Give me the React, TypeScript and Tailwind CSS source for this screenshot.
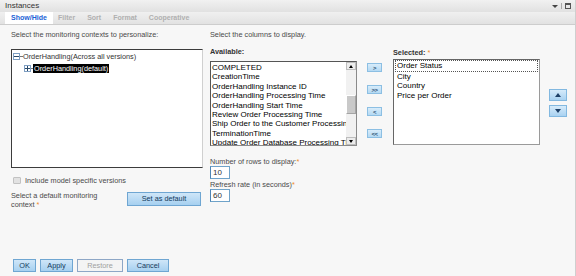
const available = [
  "COMPLETED",
  "CreationTime",
  "OrderHandling Instance ID",
  "OrderHandling Processing Time",
  "OrderHandling Start Time",
  "Review Order Processing Time",
  "Ship Order to the Customer Processing Time",
  "TerminationTime",
  "Update Order Database Processing Time",
];

const selected = ["Order Status", "City", "Country", "Price per Order"];

function BlueButton({ label, className = "", disabled = false }: { label: string; className?: string; disabled?: boolean }) {
  return (
    <button
      type="button"
      className={`h-[13px] flex items-center justify-center border text-[7.3px] leading-none ${
        disabled
          ? "bg-[#f4f4f4] border-[#8ea7c6] text-[#a0a0a0]"
          : "bg-gradient-to-b from-[#cfe6f8] to-[#a6d0f0] border-[#6fa6d2] text-[#143a5c]"
      } ${className}`}
    >
      {label}
    </button>
  );
}

function ArrowButton({ glyph }: { glyph: string }) {
  return (
    <button
      type="button"
      className="w-[15px] h-[9px] flex items-center justify-center bg-gradient-to-b from-[#d8ecfa] to-[#b4d9f3] border border-[#8cbfe3] text-[6px] font-bold leading-none text-[#2a4f70] tracking-[-0.5px]"
    >
      {glyph}
    </button>
  );
}

function TreeIcon({ minus }: { minus: boolean }) {
  return (
    <span className="relative w-[7px] h-[7px] border border-[#7e9ec2] bg-white flex items-center justify-center shrink-0">
      <span className="absolute w-[5px] h-px bg-[#2a4a6a]" />
      {!minus && <span className="absolute h-[5px] w-px bg-[#2a4a6a]" />}
    </span>
  );
}

export default function App() {
  return (
    <div className="w-[576px] h-[276px] overflow-hidden bg-[#f7f7f7] flex flex-col font-['Liberation_Sans',Arial,sans-serif] border-r border-[#cfcfcf]">
      {/* title bar */}
      <div className="h-[12px] shrink-0 bg-gradient-to-b from-[#f1f1f1] to-[#e1e1e1] flex items-center justify-between pl-[5px] pr-[4px]">
        <span className="text-[8px] leading-none text-[#333]">Instances</span>
        <div className="flex items-center gap-[3px]">
          <span className="w-0 h-0 border-l-[3px] border-r-[3px] border-t-[3px] border-l-transparent border-r-transparent border-t-[#444]" />
          <span className="w-px h-[6px] bg-[#aaa]" />
          <span className="w-[6px] h-[6px] border border-[#555] border-t-2" />
        </div>
      </div>

      {/* tabs */}
      <div className="h-[13px] shrink-0 bg-gradient-to-b from-[#f0f0f0] to-[#e2e2e2] border-b border-[#cdcdcd] flex items-end pl-[5px]">
        <div className="h-[12px] w-[48px] bg-white flex items-center justify-center text-[7px] font-bold text-[#1a5fd6]">
          Show/Hide
        </div>
        <span className="ml-[5px] mb-[3px] text-[7px] font-bold text-[#b0b0b0] leading-none">Filter</span>
        <span className="ml-[12px] mb-[3px] text-[7px] font-bold text-[#b0b0b0] leading-none">Sort</span>
        <span className="ml-[12px] mb-[3px] text-[7px] font-bold text-[#b0b0b0] leading-none">Format</span>
        <span className="ml-[12px] mb-[3px] text-[7px] font-bold text-[#b0b0b0] leading-none">Cooperative</span>
      </div>

      <div className="flex-1 flex text-[7.3px] leading-[9px] text-[#4a4a4a]">
        {/* left column */}
        <div className="pl-[11px] w-[203px] flex flex-col">
          <p className="mt-[5px]">Select the monitoring contexts to personalize:</p>
          <div className="mt-[10px] h-[119px] w-[192px] bg-white border border-[#3c3c3c] border-r-[#d0d0d0] text-[#333]">
            <div className="h-[12px] flex items-center pl-px">
              <TreeIcon minus />
              <span className="w-[3px] h-px bg-[#777]" />
              <span>OrderHandling(Across all versions)</span>
            </div>
            <div className="h-[12px] flex items-center pl-[12px]">
              <TreeIcon minus={false} />
              <span className="w-[2px] h-px bg-[#777]" />
              <span className="bg-black text-white px-px">OrderHandling(default)</span>
            </div>
          </div>
          <div className="mt-[8px] flex items-center pl-[2px]">
            <span className="w-[8px] h-[7px] bg-[#e2e2e2] border border-[#c2c2c2] rounded-[1px]" />
            <span className="ml-[4px]">Include model specific versions</span>
          </div>
          <div className="mt-[6px] flex items-start">
            <div className="w-[100px]">
              <div>Select a default monitoring</div>
              <div>
                context <span className="text-[#f08a2a]">*</span>
              </div>
            </div>
            <BlueButton label="Set as default" className="ml-[16px] mt-[1px] w-[74px] h-[14px]" />
          </div>
        </div>

        {/* right column */}
        <div className="pl-[7px] flex flex-col">
          <p className="mt-[5px]">Select the columns to display.</p>
          <div className="flex items-start mt-[8px]">
            <div className="flex flex-col">
              <span className="font-bold text-[#333]">Available:</span>
              <div className="mt-[5px] h-[85px] w-[147px] bg-white border border-[#8a8a8a] border-t-[#555] border-l-[#555] flex text-[8px] leading-[9.4px] text-black">
                <div className="flex-1 overflow-hidden pl-px pt-px">
                  {available.map((a) => (
                    <div key={a} className="whitespace-nowrap">{a}</div>
                  ))}
                </div>
                <div className="w-[10px] bg-[#f1f1f1] flex flex-col">
                  <div className="h-[8px] bg-[#ececec] border border-[#bdbdbd] flex items-center justify-center">
                    <span className="w-0 h-0 border-l-[2px] border-r-[2px] border-b-[3px] border-l-transparent border-r-transparent border-b-black" />
                  </div>
                  <div className="h-[25px]" />
                  <div className="h-[19px] bg-[#c9c9c9] border border-[#a5a5a5] border-t-white border-l-white" />
                  <div className="flex-1" />
                  <div className="h-[8px] bg-[#ececec] border border-[#bdbdbd] flex items-center justify-center">
                    <span className="w-0 h-0 border-l-[2px] border-r-[2px] border-t-[3px] border-l-transparent border-r-transparent border-t-black" />
                  </div>
                </div>
              </div>
            </div>

            <div className="ml-[10px] mt-[16px] flex flex-col gap-[13px]">
              <ArrowButton glyph=">" />
              <ArrowButton glyph=">>" />
              <ArrowButton glyph="<" />
              <ArrowButton glyph="<<" />
            </div>

            <div className="ml-[11px] flex flex-col">
              <span className="mt-[1px] font-bold text-[#333]">
                Selected: <span className="text-[#f08a2a] font-normal">*</span>
              </span>
              <div className="mt-[2px] h-[86px] w-[147px] bg-white border border-[#9a9a9a] border-t-[#666] border-l-[#666] text-[8px] leading-[9.6px] text-black pt-px pl-px pr-px">
                {selected.map((s, i) => (
                  <div
                    key={s}
                    className={i === 0 ? "border border-dotted border-[#555] pl-px -mt-px" : "pl-[2px]"}
                  >
                    {s}
                  </div>
                ))}
              </div>
            </div>

            <div className="ml-[9px] mt-[42px] flex flex-col gap-[4px]">
              <button type="button" className="w-[18px] h-[12px] flex items-center justify-center bg-gradient-to-b from-[#d6ebfa] to-[#a9d2f1] border border-[#82b8e0]">
                <span className="w-0 h-0 border-l-[3px] border-r-[3px] border-b-[4px] border-l-transparent border-r-transparent border-b-[#1d3f66]" />
              </button>
              <button type="button" className="w-[18px] h-[12px] flex items-center justify-center bg-gradient-to-b from-[#d6ebfa] to-[#a9d2f1] border border-[#82b8e0]">
                <span className="w-0 h-0 border-l-[3px] border-r-[3px] border-t-[4px] border-l-transparent border-r-transparent border-t-[#1d3f66]" />
              </button>
            </div>
          </div>

          <p className="mt-[11px]">
            Number of rows to display:<span className="text-[#f08a2a]">*</span>
          </p>
          <div className="w-[20px] h-[13px] bg-white border border-[#6fa3c9] border-l-[#4f86b5] flex items-center pl-[2px] text-[8px] text-[#333]">
            10
          </div>
          <p className="mt-[1px]">
            Refresh rate (in seconds)<span className="text-[#f08a2a]">*</span>
          </p>
          <div className="w-[20px] h-[13px] bg-white border border-[#6fa3c9] border-l-[#4f86b5] flex items-center pl-[2px] text-[8px] text-[#333]">
            60
          </div>
        </div>
      </div>

      {/* footer */}
      <div className="shrink-0 pl-[13px] pb-[4px] flex gap-[4px]">
        <BlueButton label="OK" className="w-[23px]" />
        <BlueButton label="Apply" className="w-[33px]" />
        <BlueButton label="Restore" className="w-[46px]" disabled />
        <BlueButton label="Cancel" className="w-[42px]" />
      </div>
    </div>
  );
}
